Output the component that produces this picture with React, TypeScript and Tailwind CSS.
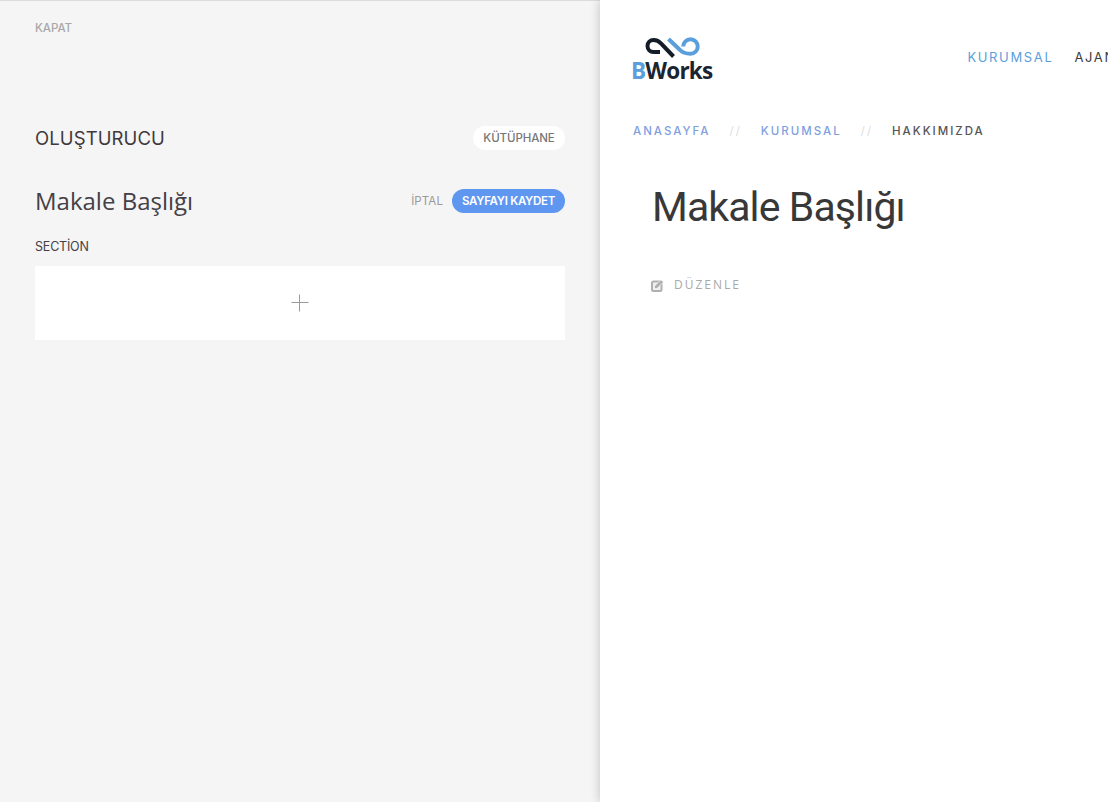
import React from "react";

const mont = "font-['Inter','Liberation_Sans',sans-serif]";

function Logo() {
  return (
    <div className="flex w-[82px] flex-col items-center">
      <svg width="56" height="22" viewBox="0 0 56 22" fill="none" className="ml-[2px]">
        <path d="M15 16 H8.5 A6 6 0 0 1 8.5 4 C12 4 14 5 16 7.5 L28.5 20.5" stroke="#141c28" strokeWidth="4" />
        <path d="M23.5 3 L35 14 Q38.5 17.75 45.5 17.75 A7.25 7.25 0 1 0 38.25 10.5" stroke="#5a9fdc" strokeWidth="4" />
      </svg>
      <div className="mt-[1px] whitespace-nowrap font-['Open_Sans',sans-serif] text-[22.5px] leading-[24px] font-bold tracking-[-0.8px] text-[#1b2431]">
        <span className="text-[#5a9fdc]">B</span>Works
      </div>
    </div>
  );
}

function EditIcon() {
  return (
    <svg width="13" height="13" viewBox="0 0 13 13">
      <rect x="1" y="2.5" width="9.5" height="9.5" rx="1.5" fill="#f0f0f0" stroke="#b0b0b0" strokeWidth="2" />
      <path d="M3.5 9.5 V7 L10 0.8 L12.5 3 L6 9.5 Z" fill="#b0b0b0" stroke="#ffffff" strokeWidth="0.6" />
    </svg>
  );
}

export default function App() {
  return (
    <div className="flex h-[802px] w-[1108px] overflow-hidden bg-white">
      <aside className={`flex h-full w-[600px] shrink-0 flex-col border-t border-[#dcdcdf] bg-[#f5f5f5] px-[35px] ${mont}`}>
        <div className="mt-[20px] text-[11.5px] leading-[14px] font-medium tracking-[-0.05px] text-[#a9a9a9]">KAPAT</div>
        <div className="mt-[91px] flex h-[24px] items-center justify-between">
          <h2 className="text-[18.5px] leading-[24px] font-normal tracking-[0.1px] text-[#3f3a3d]">OLUŞTURUCU</h2>
          <button className="flex h-[24px] w-[92px] items-center justify-center rounded-full bg-white pt-[1px] text-[11.5px] font-medium tracking-[-0.1px] text-[#777]">KÜTÜPHANE</button>
        </div>
        <div className="mt-[39px] flex h-[24px] items-center justify-between">
          <h1 className="font-['Open_Sans',sans-serif] text-[24px] leading-[24px] font-normal text-[#454045]">Makale Başlığı</h1>
          <div className="flex items-center gap-[9px]">
            <span className="pt-[2px] text-[11.5px] tracking-[0.1px] text-[#9a9a9a]">İPTAL</span>
            <button className="flex h-[24px] w-[113px] items-center justify-center rounded-full bg-[#5e96f0] pt-[1px] text-[11.5px] font-semibold tracking-[-0.3px] text-white">SAYFAYI KAYDET</button>
          </div>
        </div>
        <div className="mt-[26px] text-[12.5px] leading-[16px] tracking-[-0.2px] text-[#454045]">SECTİON</div>
        <div className="mt-[11px] flex h-[74px] items-center justify-center bg-white">
          <svg width="18" height="18" viewBox="0 0 18 18">
            <path d="M8.5 0.5 V17.5 M0.5 8.5 H17.5" stroke="#9a9a9a" strokeWidth="1" />
          </svg>
        </div>
      </aside>

      <main className="relative h-full min-w-0 flex-1 overflow-hidden bg-white shadow-[0_0_10px_rgba(0,0,0,0.22)]">
        <header className="flex h-[124px] items-start pt-[36px] pl-[31px]">
          <Logo />
          <nav className={`ml-[255px] flex h-[44px] items-center gap-[21px] whitespace-nowrap text-[13px] font-normal tracking-[1.65px] ${mont}`}>
            <span className="text-[#5a9fdc]">KURUMSAL</span>
            <span className="text-[#3c3c3c]">AJANS</span>
          </nav>
        </header>
        <div className={`mt-[1px] flex h-[14px] items-center pl-[33px] text-[11.5px] font-medium tracking-[2px] whitespace-nowrap ${mont}`}>
          <span className="text-[#7f9fe0]">ANASAYFA</span>
          <span className="mx-[19px] font-normal text-[#dedede]">//</span>
          <span className="text-[#7f9fe0]">KURUMSAL</span>
          <span className="mx-[19px] font-normal text-[#dedede]">//</span>
          <span className="text-[#555]">HAKKIMIZDA</span>
        </div>
        <h1 className="mt-[42px] pl-[52px] font-['Roboto',sans-serif] text-[41px] leading-[52px] font-normal tracking-[-0.9px] text-[#383838]">Makale Başlığı</h1>
        <div className="mt-[44px] flex items-center gap-[10px] pl-[51px] font-['Open_Sans',sans-serif] text-[12px] leading-[16px] tracking-[2px] text-[#a9a9a9]">
          <EditIcon />
          <span>DÜZENLE</span>
        </div>
      </main>
    </div>
  );
}
